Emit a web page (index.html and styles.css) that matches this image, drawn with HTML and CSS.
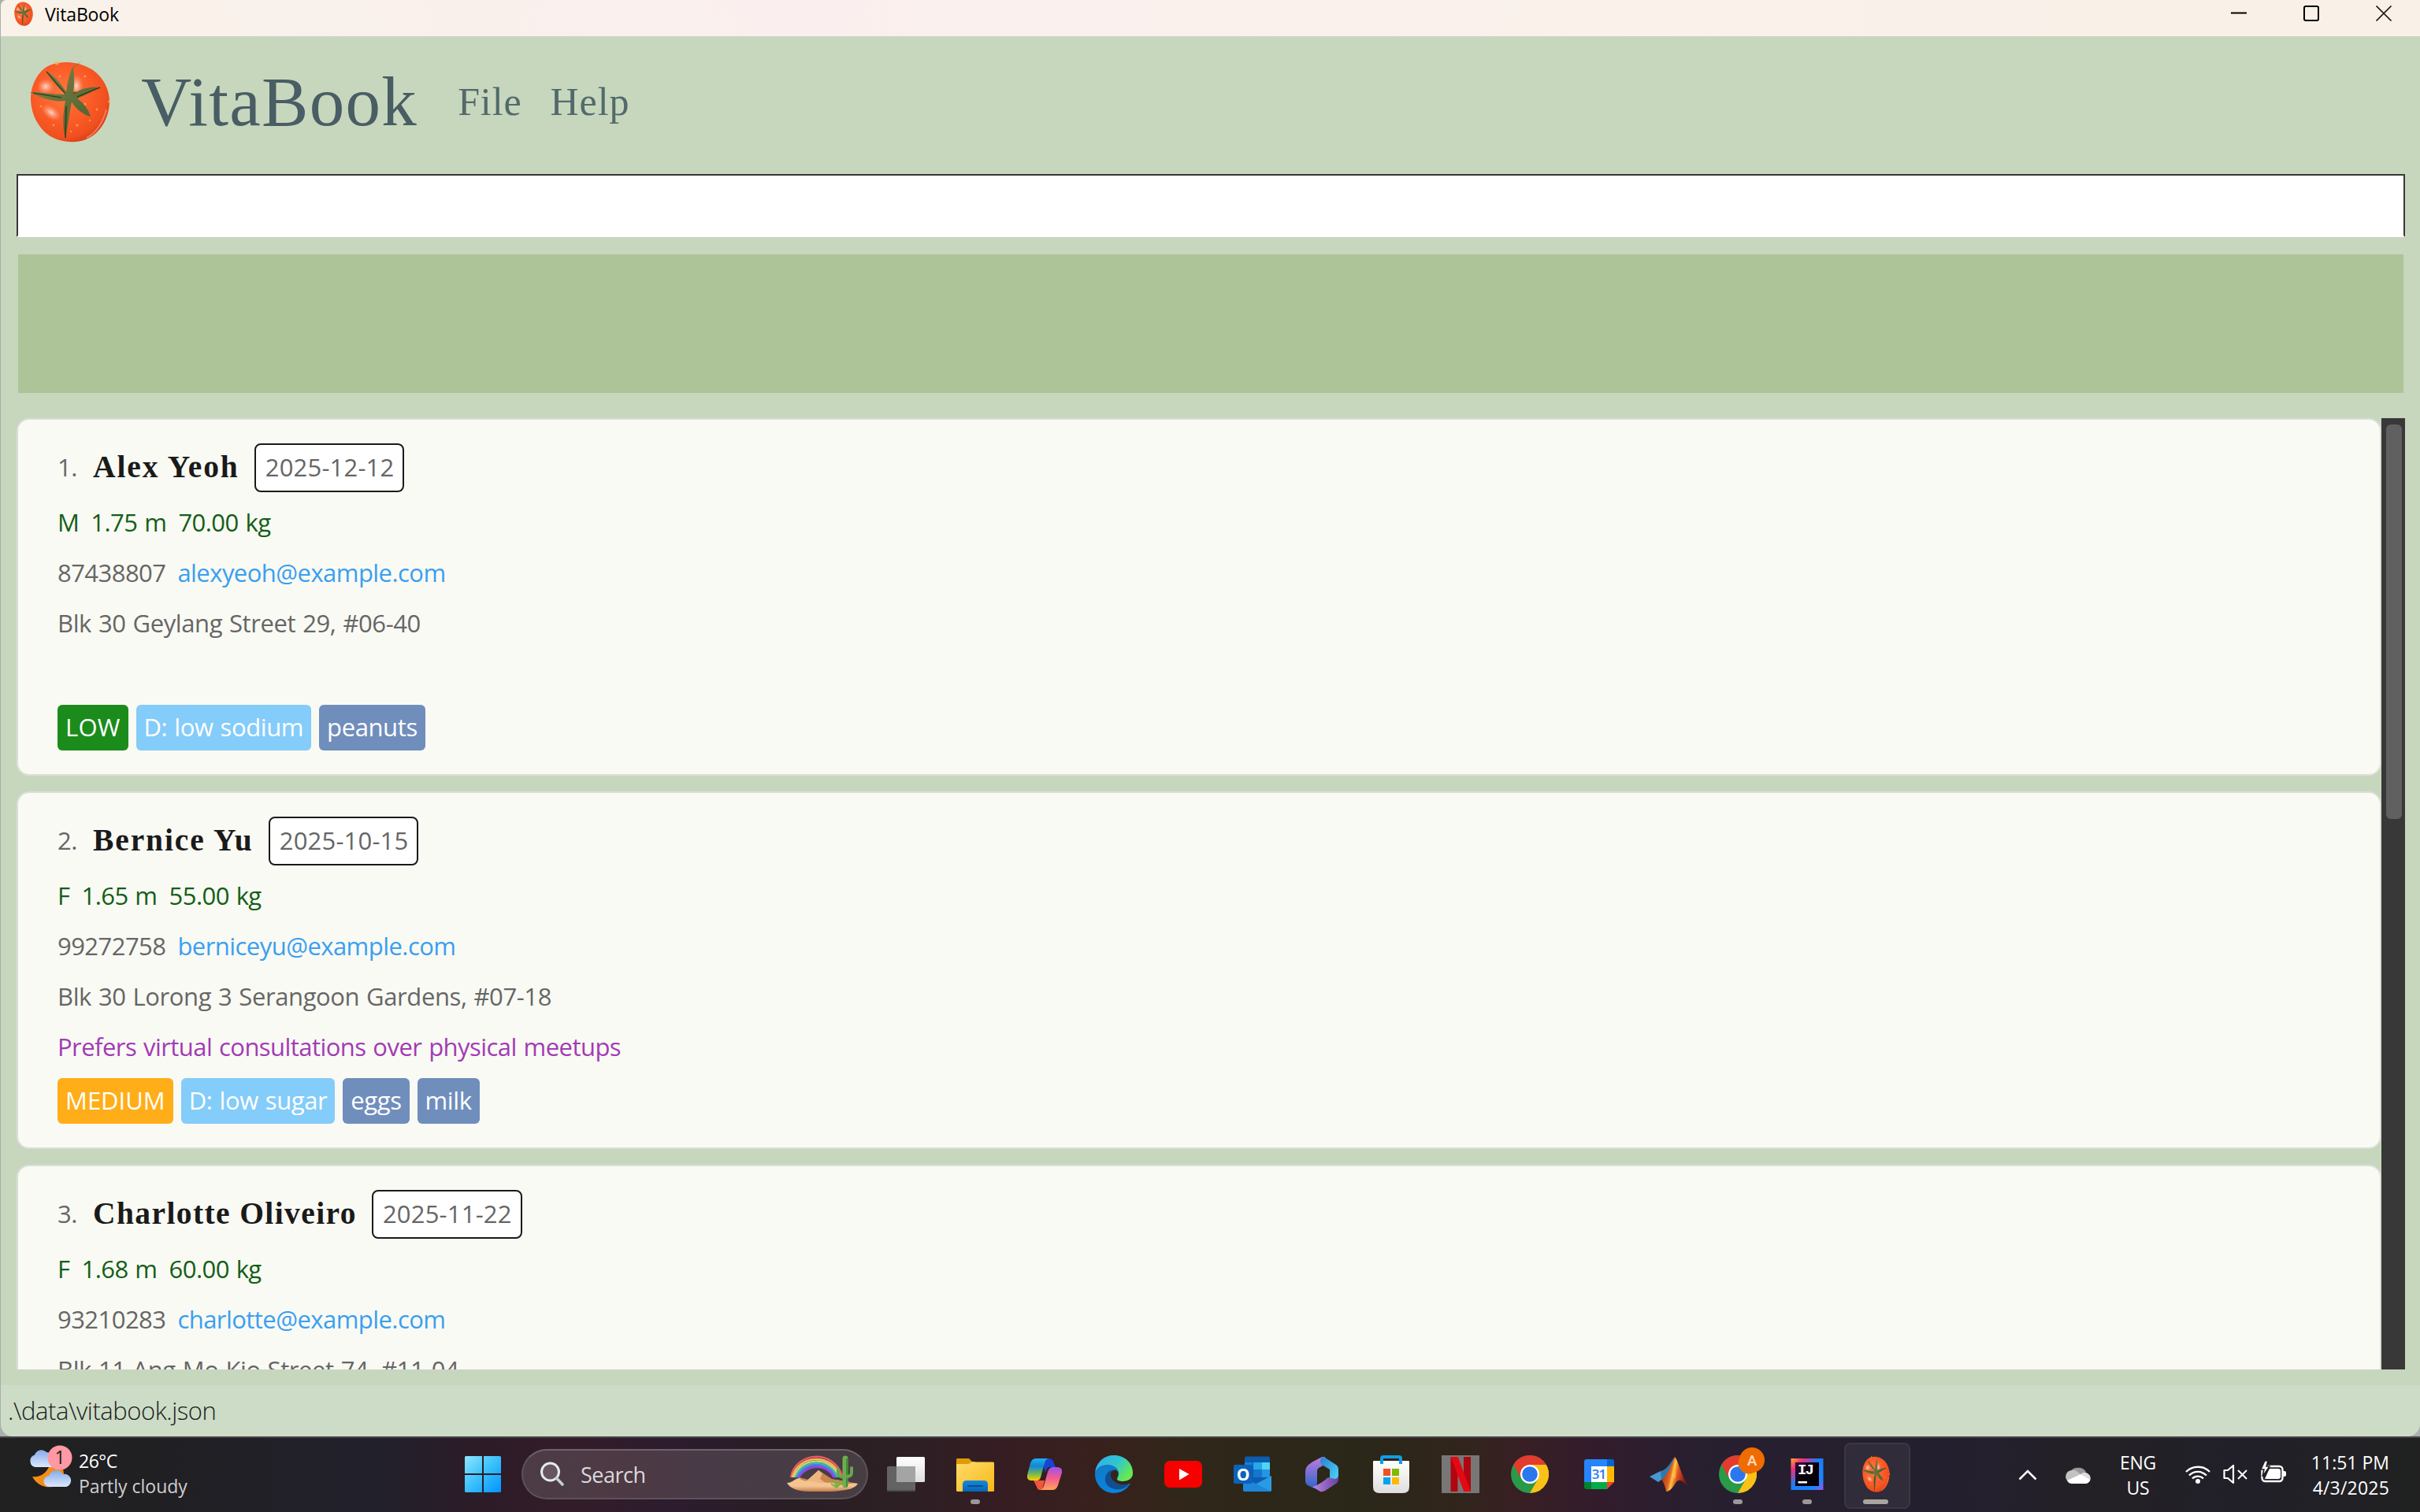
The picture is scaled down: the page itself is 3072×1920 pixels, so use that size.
FILE: index.html
```html
<!DOCTYPE html>
<html lang="en">
<head>
<meta charset="utf-8">
<title>VitaBook</title>
<link rel="stylesheet" href="styles.css">
</head>
<body>
<svg class="defs" width="0" height="0" aria-hidden="true">
  <defs>
    <radialGradient id="skin" cx=".42" cy=".4" r=".62"><stop offset="0" stop-color="#ff7840"/><stop offset=".6" stop-color="#fa5a26"/><stop offset=".88" stop-color="#f0501f"/><stop offset="1" stop-color="#dd4219"/></radialGradient>
    <radialGradient id="shine"><stop offset="0" stop-color="#fff" stop-opacity=".75"/><stop offset="1" stop-color="#ffb090" stop-opacity="0"/></radialGradient>
    <linearGradient id="stem" x2="1" y2="1"><stop offset="0" stop-color="#7d8a4c"/><stop offset="1" stop-color="#4a5a28"/></linearGradient>
    <symbol id="tomato" viewBox="0 0 102 104" preserveAspectRatio="none">
      <path fill="url(#skin)" d="M36 3C50 0 66 3 80 12C94 22 101 38 101 52C101 66 95 82 84 92C74 101 62 104 50 103C36 102 22 97 13 84C5 74 1 60 1 48C1 34 7 20 17 11C23 6 29 4 36 3Z"/>
      <path fill="none" stroke="#ffa080" stroke-width="2" opacity=".6" d="M97 62C93 78 84 92 72 98"/>
      <ellipse cx="20" cy="33" rx="11" ry="10" fill="url(#shine)"/><ellipse cx="27" cy="66" rx="14" ry="8" transform="rotate(35 27 66)" fill="url(#shine)"/><ellipse cx="59" cy="32" rx="9" ry="14" fill="url(#shine)"/>
      <g fill="#ffb25e" opacity=".7"><circle cx="34" cy="3" r="2.5"/><circle cx="101" cy="52" r="2"/><circle cx="70" cy="55" r="1.6"/><circle cx="78" cy="38" r="1.4"/><circle cx="30" cy="82" r="1.4"/><circle cx="60" cy="82" r="1.6"/><circle cx="70" cy="20" r="1.4"/><circle cx="14" cy="58" r="1.3"/><circle cx="85" cy="62" r="1.4"/><circle cx="38" cy="20" r="1.3"/><circle cx="52" cy="90" r="1.2"/><circle cx="76" cy="76" r="1.2"/></g>
      <path fill="#5a2412" opacity=".75" d="M47 42l12-3 3 8-12 8z"/>
      <path fill="url(#stem)" d="M46 41C40 40 29 27 20 13C29 17 39 28 46 40C47 29 50 20 53 10L66 0L55 10C57 22 56 33 55 43C64 35 76 33 90 34C81 37 71 44 60 48C68 54 74 61 77 71C66 68 57 60 53 52C50 67 48 83 45 99C41 84 42 66 45 51C31 53 15 48 0 40C15 40 30 43 43 43Z"/>
      <path fill="none" stroke="#232e14" stroke-width="1.6" opacity=".7" d="M21 14L45 42M45 98L46 58M60 46L89 34M4 41L40 47"/>
    </symbol>
    <linearGradient id="win" gradientUnits="userSpaceOnUse" x1="0" y1="0" x2="46" y2="46"><stop offset="0" stop-color="#8ee6ff"/><stop offset=".45" stop-color="#40c4fb"/><stop offset="1" stop-color="#0094ff"/></linearGradient>
    <linearGradient id="cld" x2="0" y2="1"><stop offset="0" stop-color="#86abea"/><stop offset="1" stop-color="#dce8fb"/></linearGradient>
    <linearGradient id="moon" x2="1" y2="1"><stop offset="0" stop-color="#f5a11c"/><stop offset="1" stop-color="#f47a16"/></linearGradient>
    <linearGradient id="sand" x2="0" y2="1"><stop offset="0" stop-color="#f6c68c"/><stop offset=".6" stop-color="#f3c393"/><stop offset="1" stop-color="#c47c45"/></linearGradient>
    <linearGradient id="white" x2="0" y2="1"><stop offset="0" stop-color="#fff"/><stop offset="1" stop-color="#dedede"/></linearGradient>
    <linearGradient id="folder" x2="1" y2="1"><stop offset="0" stop-color="#ffdc6b"/><stop offset="1" stop-color="#f7b816"/></linearGradient>
    <linearGradient id="blue" x2="0" y2="1"><stop offset="0" stop-color="#1588d8"/><stop offset="1" stop-color="#0666b8"/></linearGradient>
    <linearGradient id="cop1" x2="0" y2="1"><stop offset="0" stop-color="#20b1f0"/><stop offset=".35" stop-color="#1186d6"/><stop offset=".7" stop-color="#75b851"/><stop offset="1" stop-color="#ffd000"/></linearGradient>
    <linearGradient id="cop2" x2="0" y2="1"><stop offset="0" stop-color="#9e50ec"/><stop offset=".5" stop-color="#f65e8c"/><stop offset="1" stop-color="#ffa35a"/></linearGradient>
    <linearGradient id="edge1" x2="1" y2=".6"><stop offset="0" stop-color="#35a8f0"/><stop offset=".55" stop-color="#2fc5cf"/><stop offset="1" stop-color="#69ea4c"/></linearGradient>
    <linearGradient id="edge2" x2=".3" y2="1"><stop offset="0" stop-color="#1377c0"/><stop offset="1" stop-color="#0a84dc"/></linearGradient>
    <linearGradient id="m1" x2="0" y2="1"><stop offset="0" stop-color="#c07be0"/><stop offset="1" stop-color="#2e66c8"/></linearGradient>
    <linearGradient id="m2" x2="1" y2="1"><stop offset="0" stop-color="#2b7fd4"/><stop offset="1" stop-color="#4fdcf8"/></linearGradient>
    <linearGradient id="m3" x2="1" y2="0"><stop offset="0" stop-color="#b98ae6"/><stop offset="1" stop-color="#6b3e9c"/></linearGradient>
    <linearGradient id="mat1" x2="1" y2=".3"><stop offset="0" stop-color="#8c1c14"/><stop offset=".45" stop-color="#e2641f"/><stop offset=".55" stop-color="#ffc545"/><stop offset=".7" stop-color="#e0541f"/><stop offset="1" stop-color="#8c1813"/></linearGradient>
    <linearGradient id="ij" x2="1" y2="1"><stop offset="0" stop-color="#ffb22e"/><stop offset=".2" stop-color="#f0307a"/><stop offset=".45" stop-color="#1d7cf5"/><stop offset=".8" stop-color="#1b86ff"/><stop offset="1" stop-color="#a052e8"/></linearGradient>
    <linearGradient id="ijin" x2="1" y2="1"><stop offset="0" stop-color="#3a0838"/><stop offset=".5" stop-color="#050008"/></linearGradient>
    <symbol id="chrome" viewBox="0 0 48 48">
      <circle cx="24" cy="24" r="24" fill="#2a9948"/>
      <path fill="#fbc116" d="M24 12H44.8A24 24 0 0 1 24 48L34.4 30Z"/>
      <path fill="#e33b2e" d="M3.2 12A24 24 0 0 1 44.8 12H24L13.6 30Z"/>
      <circle cx="24" cy="24" r="12" fill="#fff"/><circle cx="24" cy="24" r="9.8" fill="#2b78ee"/>
    </symbol>
  </defs>
</svg>

<div class="desktop">
  <main class="window">
    <header class="titlebar">
      <svg class="titlebar-icon"><use href="#tomato"/></svg>
      <span class="titlebar-text">VitaBook</span>
      <div class="controls">
        <svg width="20" height="20" viewBox="0 0 20 20"><path d="M0 9.500H20" stroke="#000" stroke-width="2"/></svg>
        <svg width="20" height="20" viewBox="0 0 20 20"><rect x="1" y="1" width="18" height="18" rx="2" fill="none" stroke="#000" stroke-width="2"/></svg>
        <svg width="20" height="20" viewBox="0 0 20 20"><path d="M.5.5l19 19M19.500.5l-19 19" stroke="#111" stroke-width="1.7"/></svg>
      </div>
    </header>

    <nav class="menu">
      <svg class="menu-logo"><use href="#tomato"/></svg>
      <h1 class="brand">VitaBook</h1>
      <span class="menu-item file">File</span>
      <span class="menu-item help">Help</span>
    </nav>

    <div class="command"></div>
    <div class="result"></div>

    <section class="list">
      <div class="cards">
        <article class="card">
          <div class="head"><span class="index">1.</span><h2 class="name">Alex Yeoh</h2><span class="date">2025-12-12</span></div>
          <p class="row vitals"><span>M</span><span>1.75 m</span><span>70.00 kg</span></p>
          <p class="row"><span>87438807</span><span class="email">alexyeoh@example.com</span></p>
          <p class="row address">Blk 30 Geylang Street 29, #06-40</p>
          <p class="row note"></p>
          <div class="tags"><span class="tag low">LOW</span><span class="tag diet">D: low sodium</span><span class="tag allergy">peanuts</span></div>
        </article>
        <article class="card">
          <div class="head"><span class="index">2.</span><h2 class="name">Bernice Yu</h2><span class="date">2025-10-15</span></div>
          <p class="row vitals"><span>F</span><span>1.65 m</span><span>55.00 kg</span></p>
          <p class="row"><span>99272758</span><span class="email">berniceyu@example.com</span></p>
          <p class="row address">Blk 30 Lorong 3 Serangoon Gardens, #07-18</p>
          <p class="row note">Prefers virtual consultations over physical meetups</p>
          <div class="tags"><span class="tag medium">MEDIUM</span><span class="tag diet">D: low sugar</span><span class="tag allergy">eggs</span><span class="tag allergy">milk</span></div>
        </article>
        <article class="card">
          <div class="head"><span class="index">3.</span><h2 class="name long">Charlotte Oliveiro</h2><span class="date">2025-11-22</span></div>
          <p class="row vitals"><span>F</span><span>1.68 m</span><span>60.00 kg</span></p>
          <p class="row"><span>93210283</span><span class="email">charlotte@example.com</span></p>
          <p class="row address">Blk 11 Ang Mo Kio Street 74, #11-04</p>
          <p class="row note"></p>
          <div class="tags"></div>
        </article>
      </div>
      <div class="scrollbar"><div class="thumb"></div></div>
    </section>

    <footer class="status">.\data\vitabook.json</footer>
  </main>

  <div class="taskbar">
    <div class="weather">
      <svg width="56" height="56" viewBox="0 0 56 56">
        <path fill="url(#moon)" d="M4 40C16 42 28 32 28 14C40 20 48 34 42 44C34 58 12 56 4 40Z"/>
        <path fill="url(#cld)" d="M8 28a8 8 0 0 1-1-15.500A9 9 0 0 1 22 9C27 9 31 14 31 19v9Z"/>
        <path fill="url(#cld)" d="M26 53a7 7 0 0 1-1-14A10 10 0 0 1 43 37a8 8 0 0 1 4 16Z"/>
        <circle cx="39" cy="16" r="15.500" fill="#ff99a4"/>
        <text x="39" y="24" text-anchor="middle" class="badge-text">1</text>
      </svg>
      <div class="weather-text"><span class="temp">26°C</span><span class="sky">Partly cloudy</span></div>
    </div>
    <div class="app"><svg width="46" height="46" viewBox="0 0 46 46"><path fill="url(#win)" d="M1.500 0H22V22H0V1.500A1.500 1.500 0 0 1 1.500 0ZM24 0H44.500A1.500 1.500 0 0 1 46 1.500V22H24ZM0 24H22V46H1.500A1.500 1.500 0 0 1 0 44.500ZM24 24H46V44.500A1.500 1.500 0 0 1 44.500 46H24Z"/></svg></div>
    <div class="search">
      <svg width="32" height="32" viewBox="0 0 32 32"><circle cx="12.500" cy="13" r="11" fill="rgba(255,255,255,.14)" stroke="#e6ebec" stroke-width="3"/><path d="M20.500 21l7.500 8" stroke="#c6ced0" stroke-width="3.600" stroke-linecap="round"/></svg>
      <span class="search-text">Search</span>
      <svg class="search-art" width="92" height="48" viewBox="0 0 92 48">
        <g fill="none" stroke-width="2.500"><path stroke="#f0585c" d="M6 28C12-5 60-8 71 26"/><path stroke="#f8b85c" d="M8 28C15-1 58-4 69 27"/><path stroke="#c7d77c" d="M10 28C18 2 56 0 67 27"/><path stroke="#49b7a8" d="M12 28C20 5 54 3 65 28"/><path stroke="#4585e8" d="M14 28C23 8 52 6 63 28"/><path stroke="#9a42ee" d="M16 28C25 12 50 9 61 28"/></g>
        <path fill="#c98650" d="M8 33L17 28L28 31L41 19L58 30L76 33L90 36L82 43H10Z"/>
        <path fill="#edb680" d="M41 19L46 23L43 30L50 35L24 34Z"/>
        <path fill="url(#sand)" d="M1 35C8 35 10 30 17 29C20 34 30 32 38 34C52 36 58 33 66 37C76 40 80 34 91 36C88 42 76 45 58 46H30C18 46 5 43 1 35Z"/>
        <path fill="none" stroke="#6fae4e" stroke-width="7" stroke-linecap="round" d="M75 4V38"/>
        <path fill="none" stroke="#438b3d" stroke-width="2" d="M77 4V40"/>
        <path fill="none" stroke="#65a84b" stroke-width="4" stroke-linecap="round" d="M66 18V23Q66 27 73 28M83 16V22Q83 27 77 27"/>
        <path stroke="#75b63e" stroke-width="2" d="M64 41L57 36M64 41L61 32M64 41L66 31M64 41L71 34"/>
      </svg>
    </div>
    <div class="app"><svg width="48" height="48" viewBox="0 0 48 48"><rect x="12" y="2" width="36" height="32" rx="1.500" fill="url(#white)"/><rect y="14" width="36" height="32" rx="1.500" fill="#636363"/><path fill="#a5a4a5" d="M12 14H35Q36 14 36 15V34H12Z"/><path fill="#4c4c4c" d="M0 44H36Q36 46 34.500 46H1.500Q0 46 0 44Z"/></svg></div>
    <div class="app run"><svg width="48" height="48" viewBox="0 0 48 48"><path fill="#dd9b05" d="M0 5.500A1.500 1.500 0 0 1 1.500 4H15Q17 4 18 6L20 8H24V16H0Z"/><path fill="url(#folder)" d="M0 11H14Q17 11 19 8.500H46.500A1.500 1.500 0 0 1 48 10V44.500A1.500 1.500 0 0 1 46.500 46H1.500A1.500 1.500 0 0 1 0 44.500Z"/><path fill="url(#blue)" d="M8 46V37Q8 32 13 32H35Q40 32 40 37V46Z"/><path stroke="#0b4f91" stroke-width="2" stroke-linecap="round" d="M15 39H33"/></svg></div>
    <div class="app"><svg width="48" height="48" viewBox="0 0 48 48"><path fill="#1546d0" d="M20 4H30Q34 4 36 10L38 15H30Q27 15 25 22Z"/><path fill="#f2553c" d="M10 32H24L22 40Q21 44 18 44Q15 44 14 40Z"/><path fill="url(#cop1)" d="M13 4H29Q25 5 24 10L19 28Q18 32 14 32H7Q1 32 2 25L6 10Q8 4 13 4Z"/><path fill="url(#cop2)" d="M34 15H40Q47 15 46 22L41 38Q39 44 34 44H18Q22 43 23 39L28 21Q30 15 34 15Z"/></svg></div>
    <div class="app"><svg width="48" height="48" viewBox="0 0 48 48"><circle cx="24" cy="24" r="24" fill="url(#edge2)"/><path fill="url(#edge1)" d="M0 22C2 8 12 0 24 0C38 0 48 10 48 22C48 29 43 33 35 33C29 33 27 31 29 28C33 22 28 12 16 12C8 12 2 16 0 22Z"/><path fill="#124d92" d="M13 29C14 22 19 18 25 18.500C18 22 19 36 33 37C38 37 42 36 44 35.500C39 43 30 44 25 43C17 41 12 36 13 29Z"/><path fill="#35241a" d="M25 18.500C29 19 31 22 28.500 28C26 32 31 33 36 33C42 33 46 30 48 26L49 36L44 36C45 35 40 38 33 37C21 36 15 22 25 18.500Z"/></svg></div>
    <div class="app"><svg width="48" height="48" viewBox="0 0 48 48"><rect y="7" width="48" height="34" rx="7" fill="#f60000"/><path fill="#fff" d="M19 17L31.500 24L19 31.500Z"/></svg></div>
    <div class="app"><svg width="48" height="48" viewBox="0 0 48 48"><rect x="14" y="1.500" width="32" height="36" rx="2" fill="#0c5cb0"/><path fill="#1681d4" d="M14 9H24V28H14Z"/><path fill="#28a7ea" d="M25 9H36V18H25Z"/><path fill="#50d5f5" d="M36 9H46V18H36Z"/><path fill="#1477cc" d="M25 18H36V28H25Z"/><path fill="#2497e0" d="M36 18H46V28H36Z"/><path fill="#1173c8" d="M12 26L30 38L48 26V44Q48 46 46 46H14Q12 46 12 44Z"/><path fill="#299be3" d="M48 26V44Q48 46 46 46L28 36.500Z"/><path fill="#1d87da" d="M12 28L48 46H14Q12 46 12 44Z"/><rect y="12" width="24" height="24" rx="2" fill="#0b62bd"/><text x="12" y="31.500" text-anchor="middle" class="outlook-text">O</text></svg></div>
    <div class="app"><svg width="48" height="48" viewBox="0 0 48 48"><path fill="url(#m1)" d="M24 2C17 6 10 9 6 13Q3 16 3 20V32Q3 36 6 38L14 42Q18 39 18 34V20Q18 16 24 14L28 10V2Z"/><path fill="url(#m2)" d="M24 2Q20 8 24 12L34 18V32Q34 35 32 38L42 34Q45 32 45 28V18Q45 14 42 12L28 3Q26 2 24 2Z"/><path fill="url(#m3)" d="M45 26Q44 30 40 30L32 28Q25 34 21 36Q16 39 12 40L22 46Q24 47 28 45L42 36Q45 34 45 30Z"/></svg></div>
    <div class="app"><svg width="48" height="48" viewBox="0 0 48 48"><path fill="url(#white)" d="M1 8Q1 7 2 7H46Q47 7 47 8V40Q47 48 39 48H9Q1 48 1 40Z"/><path fill="none" stroke="#109ee8" stroke-width="4" d="M12 11V4Q12 2 14 2H34Q36 2 36 4V11"/><path fill="#f25022" d="M14 17H23V26H14Z"/><path fill="#7fba00" d="M25 17H34V26H25Z"/><path fill="#00a4ef" d="M14 28H23V37H14Z"/><path fill="#ffb900" d="M25 28H34V37H25Z"/></svg></div>
    <div class="app"><svg width="48" height="48" viewBox="0 0 48 48"><rect width="48" height="48" fill="#777"/><rect x="11.500" y="2" width="9" height="44" fill="#b1060f"/><rect x="28" y="2" width="9" height="44" fill="#b1060f"/><rect x="20" y="2" width="9" height="44" fill="#e50914" transform="translate(-9 0) skewX(20.500)"/></svg></div>
    <div class="app"><svg width="48" height="48"><use href="#chrome"/></svg></div>
    <div class="app"><svg width="48" height="48" viewBox="0 0 48 48"><path fill="#2684fc" d="M8 5H34V14H14V34H5V8Q5 5 8 5Z"/><path fill="#0066da" d="M34 5H40Q43 5 43 8V14H34Z"/><path fill="#ffba00" d="M34 14H43V34H34Z"/><path fill="#00832d" d="M5 34H14V43H8Q5 43 5 40Z"/><path fill="#00ac47" d="M14 34H34V43H14Z"/><path fill="#ea4335" d="M34 34H43L34 43Z"/><path fill="#fff" d="M14 14H34V34H14Z"/><text x="23.500" y="30" text-anchor="middle" class="calendar-text">31</text></svg></div>
    <div class="app"><svg width="48" height="48" viewBox="0 0 48 48"><path fill="#4897d1" d="M0 27L14 20L21 24L15 31L11 34Z"/><path fill="#2d79b0" d="M14 20C20 19 24 14 31 3L32 12L20 29L15 31Z"/><path fill="url(#mat1)" d="M32 2C36 6 40 24 48 38C42 33 38 29 34 34C30 39 27 46 21 46C20 40 18 34 15 31C22 28 28 10 32 2Z"/><path fill="#ffc14a" d="M32 4Q34 18 33 30L28 26Q31 14 32 4Z" opacity=".6"/></svg></div>
    <div class="app run"><svg class="wide" width="62" height="62" viewBox="0 0 62 62"><use href="#chrome" x="7" y="11" width="48" height="48"/><circle cx="45" cy="21" r="13.500" fill="#e57100"/><circle cx="49" cy="17" r="16" fill="#f06c00"/><text x="49" y="24" text-anchor="middle" class="profile-text">A</text></svg></div>
    <div class="app run"><svg width="48" height="48" viewBox="0 0 48 48"><rect x="3.500" y="4" width="41" height="40" fill="url(#ij)"/><rect x="9" y="9" width="30" height="30" fill="url(#ijin)"/><text x="12" y="24" class="ij-text">IJ</text><path fill="#fff" d="M12.500 33H24V35.500H12.500Z"/></svg></div>
    <div class="app active"><svg width="35" height="46"><use href="#tomato"/></svg></div>

    <div class="tray">
      <div class="cell"><svg width="24" height="14" viewBox="0 0 24 14"><path fill="none" stroke="#fff" stroke-width="2.500" d="M1.500 12.500L12 2L22.500 12.500"/></svg></div>
      <div class="cell"><svg width="32" height="24" viewBox="0 0 32 24"><path fill="#999" d="M6 8A11 9 0 0 1 26 8L18 14Z"/><path fill="#c2c2c2" d="M3 20A8 8 0 0 1 8 6Q13 5 19 11L3 20Z"/><path fill="#ddd" d="M19 11Q24 7 28 10A7 7 0 0 1 30 21Z"/><path fill="#fff" d="M2 19L19 11L31 18Q30 23 25 23H8Q4 23 2 19Z"/></svg></div>
      <div class="lang"><span>ENG</span><span>US</span></div>
      <div class="net">
        <svg width="32" height="32" viewBox="0 0 32 32"><g fill="none" stroke="#fff" stroke-width="2.400"><path d="M1 14A21 21 0 0 1 31 14"/><path d="M5 18.500A15.500 15.500 0 0 1 27 18.500"/><path d="M9 22.500A10 10 0 0 1 23 22.500"/></g><circle cx="16" cy="26" r="3" fill="#fff"/></svg>
        <svg width="32" height="32" viewBox="0 0 32 32"><path fill="none" stroke="#fff" stroke-width="2.200" stroke-linejoin="round" d="M1.500 12H6L13 6V28L6 22H1.500Z"/><path stroke="#fff" stroke-width="2" d="M19 12L30 23M30 12L19 23"/></svg>
        <svg width="32" height="32" viewBox="0 0 32 32"><rect x="1.500" y="7" width="26" height="19" rx="4" fill="none" stroke="#fff" stroke-width="2.400"/><path fill="#fff" d="M5 23L9 14L11 10H22Q25 10 25 13V20Q25 23 22 23ZM28 13H30Q32 13 32 15V18Q32 20 30 20H28Z"/><path fill="#fff" stroke="#211f26" stroke-width="1.500" d="M5 0L0 11H4L2 20L11 7H7L9 0Z"/></svg>
      </div>
      <div class="clock"><span>11:51 PM</span><span class="day">4/3/2025</span></div>
    </div>
  </div>
</div>
</body>
</html>
```
FILE: styles.css
```css
* { box-sizing: border-box; }
body { margin: 0; font-family: "Open Sans", "Noto Sans", sans-serif; }
h1, h2, p { margin: 0; font-weight: 400; }
svg { display: block; flex: none; overflow: visible; }
.defs { position: absolute; }

.desktop { width: 3072px; height: 1920px; overflow: hidden; background: #aab0ac; display: flex; flex-direction: column; }
.window { height: 1824px; display: flex; flex-direction: column; background: #c7d7bd; border-left: 1px solid #a9aeab; border-radius: 8px 0 16px 16px; overflow: hidden; }

.titlebar { height: 46px; display: flex; align-items: flex-start; background: linear-gradient(90deg, #f9f2e9 0, #f9f0ec 600px, #faefee 1000px, #f9f1ea 2100px, #f9f1e7 100%); padding: 2px 36px 0 17px; }
.titlebar-icon { width: 24px; height: 31px; }
.titlebar-text { margin-left: 15px; font-size: 23px; line-height: 33px; letter-spacing: -.15px; color: #000; }
.controls { margin-left: auto; display: flex; gap: 72px; padding-top: 5px; }

.menu { height: 175px; display: flex; align-items: flex-start; padding: 31px 0 0 37px; font-family: "Liberation Serif", serif; }
.menu-logo { width: 102px; height: 104px; }
.brand { margin-left: 39px; font-size: 89px; line-height: 104px; letter-spacing: 1.3px; color: #495d64; }
.menu-item { font-size: 50px; line-height: 104px; color: #536a6c; letter-spacing: .9px; }
.file { margin-left: 51px; }
.help { margin-left: 36px; }

.command { flex: none; height: 80px; margin: 0 19px 0 20px; background: #fff; border: 2px solid #383838; border-bottom-color: #fff; }
.result { flex: none; height: 176px; margin: 22px 21px 0 22px; background: #adc498; }

.list { flex: none; height: 1208px; margin: 32px 19px 0 20px; display: flex; overflow: hidden; }
.cards { flex: 1; display: flex; flex-direction: column; gap: 20px; }
.card { flex: none; height: 454px; background: #f9faf4; border: 2px solid #dcdfd9; border-radius: 16px; padding: 30px 50px; font-size: 31px; letter-spacing: -.55px; word-spacing: 1.3px; color: #666; }
.head { height: 62px; display: flex; align-items: center; }
.index { width: 45px; line-height: 60px; padding-bottom: 2px; }
.name { font-family: "Liberation Serif", serif; font-weight: 700; font-size: 39.5px; line-height: 60px; padding-bottom: 3px; letter-spacing: 1.9px; word-spacing: 0; color: #1a1a1a; }
.long { letter-spacing: 1.4px; }
.date { height: 62px; margin-left: 19px; padding: 0 11px 2px 12px; line-height: 56px; letter-spacing: .2px; border: 2px solid #1a1a1a; border-radius: 8px; background: #fff; }
.row { height: 64px; line-height: 64px; display: flex; gap: 15px; white-space: nowrap; }
.address { letter-spacing: -.4px; }
.vitals { margin-top: 6px; color: #145e17; }
.email { color: #3a9ff0; }
.note { color: #a33ab5; }
.tags { display: flex; gap: 10px; margin-top: 8px; }
.tag { height: 58px; line-height: 56px; padding: 0 10px; border-radius: 6px; color: #fff; letter-spacing: -.4px; }
.low { background: #1b8c1b; letter-spacing: .2px; }
.medium { background: #ffad18; letter-spacing: 0; }
.diet { background: #84ccfa; }
.allergy { background: #708ebc; }
.scrollbar { width: 30px; background: #383838; padding: 8px 4px 0 6px; }
.thumb { height: 501px; border-radius: 6px; background: #606060; }

.status { flex: 1; margin-top: 20px; background: #cddcc7; padding: 0 9px; font-size: 31px; line-height: 64px; font-weight: 300; letter-spacing: -.45px; color: #1c1c1c; }

.taskbar { height: 96px; border-top: 2px solid #46424a; display: flex; align-items: stretch; color: #fff;
  background: linear-gradient(90deg, #212121 0, #201f22 180px, #22202b 480px, #2d1c28 620px, #331c29 720px, #2c1c2e 860px, #2a1e25 1000px, #2c2024 1130px, #351d23 1270px, #38211c 1400px, #2f2719 1520px, #2a2719 1720px, #31251b 1850px, #381f24 1930px, #331c2c 2020px, #281f2f 2150px, #241f2e 2450px, #25202e 2520px, #232025 2660px, #211f28 2830px, #212125 3000px, #202120 100%); }
.weather { width: 569px; display: flex; padding: 9px 0 0 37px; gap: 7px; }
.weather-text { display: flex; flex-direction: column; font-size: 23px; line-height: 32px; padding-top: 4px; }
.temp { letter-spacing: -.5px; }
.sky { color: #cfcfcf; }
.badge-text { font: 23px "Open Sans", sans-serif; fill: #1a1a1a; }
.app { width: 88px; display: flex; align-items: center; justify-content: center; position: relative; padding-bottom: 2px; }
.run::after, .active::after { content: ""; position: absolute; left: 38px; bottom: 10px; width: 12px; height: 6px; border-radius: 3px; background: #9d9799; }
.active::before { content: ""; position: absolute; left: 3px; top: 6px; width: 80px; height: 80px; border: 2px solid #3b3642; border-radius: 8px; background: #302c39; }
.active { padding-right: 2px; }
.active svg { position: relative; }
.active::after { left: 27px; width: 32px; background: #a8a5a1; }
.wide { margin: -11px -7px -3px; }
.search { width: 440px; height: 64px; margin: 14px 4px 0 5px; display: flex; align-items: center; padding: 0 10px 0 22px; border: 2px solid #5d525a; border-top-color: #6f636b; border-radius: 32px; background: linear-gradient(90deg, #4c3c45, #4d3944 30%, #483b47 55%, #463e43); }
.search-text { margin-left: 19px; font-size: 27px; line-height: 60px; padding-top: 2px; letter-spacing: -.5px; color: #dcd8da; }
.search-art { margin-left: auto; }
.outlook-text { font: 700 21px "Open Sans", sans-serif; fill: #fff; }
.calendar-text { font: 600 17px "Open Sans", sans-serif; fill: #2b7de9; letter-spacing: -1px; }
.profile-text { font: 600 19px Roboto, sans-serif; fill: #fbd5b5; }
.ij-text { font: 700 19px "Liberation Mono", monospace; fill: #fff; letter-spacing: -2px; }
.tray { margin-left: auto; display: grid; grid-template-columns: 64px 64px 88px 160px 154px; align-items: center; font-size: 23px; line-height: 32px; padding-bottom: 1px; }
.cell { display: flex; justify-content: center; }
.lang { display: flex; flex-direction: column; align-items: center; letter-spacing: -.3px; padding-top: 1px; }
.net { display: flex; gap: 16px; padding: 0 16px; }
.net svg { margin-top: -4px; }
.clock { display: flex; flex-direction: column; align-items: flex-end; padding-right: 39px; white-space: nowrap; }
.day { letter-spacing: .2px; }
```
